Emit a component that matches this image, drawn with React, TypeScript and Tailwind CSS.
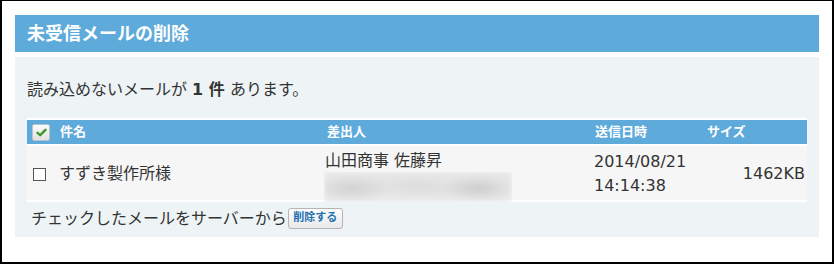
import React from "react";

const font = "font-['DejaVu_Sans','Noto_Sans_CJK_JP',sans-serif]";

function HeaderCheck() {
  return (
    <span className="flex h-[17px] w-[18px] items-center justify-center rounded-[2px] border border-[#b9c2c8] bg-[linear-gradient(#fbfbfb,#e2e2e2)]">
      <svg width="11" height="9" viewBox="0 0 11 9">
        <path d="M1.5 4.8 L4.2 7.2 L9.5 1.8" fill="none" stroke="#3c9a2c" strokeWidth="2.4" strokeLinecap="round" strokeLinejoin="round" />
      </svg>
    </span>
  );
}

export default function App() {
  return (
    <div className={`${font} h-[264px] w-[834px] border-b-2 border-l-2 border-r-2 border-t border-black bg-white px-[13px] pt-[14px] text-[#333]`}>
      <div className="flex h-[37px] items-center bg-[#5eaadb] pl-3 text-[18px] font-bold text-white">
        未受信メールの削除
      </div>
      <div className="mt-[5px] h-[180px] bg-[#eef3f6] px-3">
        <div className="pt-[21px] text-[16px] leading-[24px]">
          読み込めないメールが <span className="font-bold">1 件</span> あります。
        </div>
        <div className="mt-[16px] border-t-2 border-white">
          <div className="grid h-[24px] grid-cols-[297px_270px_113px_100px] items-center bg-[#5eaadb] text-[13px] font-bold text-white">
            <div className="flex items-center gap-[10px] pl-[5px]">
              <HeaderCheck />
              <span>件名</span>
            </div>
            <div className="pl-[3px]">差出人</div>
            <div className="pl-[1px]">送信日時</div>
            <div>サイズ</div>
          </div>
          <div className="grid h-[58px] grid-cols-[297px_270px_113px_100px] border-y-2 border-white bg-[#f6f6f6] text-[16px]">
            <div className="flex items-center gap-[13px] pl-[6px]">
              <span className="h-[13px] w-[13px] border border-[#555] bg-white" />
              <span className="leading-[24px]">すずき製作所様</span>
            </div>
            <div className="flex flex-col pt-[4px]">
              <div className="pl-[1px] leading-[22px]">山田商事 佐藤昇</div>
              <div className="h-[30px] w-[188px] overflow-hidden">
                <div className="h-full w-full bg-[radial-gradient(ellipse_22%_45%_at_15%_55%,#d2d2d2,transparent),radial-gradient(ellipse_20%_45%_at_82%_55%,#cdcdcd,transparent),radial-gradient(ellipse_30%_40%_at_50%_50%,#dcdcdc,transparent),linear-gradient(#e6e6e6,#e9e9e9)] blur-[2px]" />
              </div>
            </div>
            <div className="flex flex-col justify-center leading-[24px]">
              <div>2014/08/21</div>
              <div>14:14:38</div>
            </div>
            <div className="flex items-center justify-end pr-[2px] leading-[24px]">1462KB</div>
          </div>
          <div className="flex h-[33px] items-center pl-[4px] text-[16px]">
            <span className="leading-[24px]">チェックしたメールをサーバーから</span>
            <button className="ml-[1px] flex h-[21px] w-[55px] items-center justify-center rounded-[3px] border border-[#b5b5b5] bg-[linear-gradient(#fdfdfd,#e9e9e9)] text-[11px] font-bold text-[#1f6fb3]">
              削除する
            </button>
          </div>
        </div>
      </div>
    </div>
  );
}
